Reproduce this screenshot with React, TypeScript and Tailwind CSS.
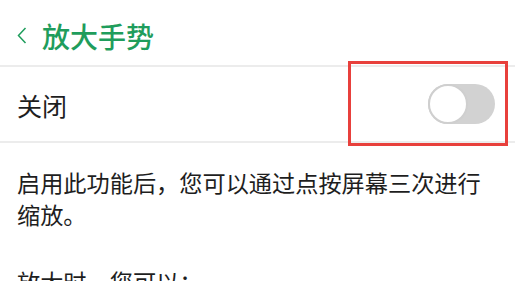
import React from 'react'

const font = { fontFamily: '"Noto Sans CJK SC", "Noto Sans", sans-serif' }

function Toggle() {
  return (
    <div className="flex h-[40px] w-[67px] items-center rounded-full bg-[#d2d2d2]">
      <div className="h-[40px] w-[40px] rounded-full border-2 border-[#cfcfcf] bg-white" />
    </div>
  )
}

export default function App() {
  return (
    <div className="relative h-[281px] w-[531px] overflow-hidden bg-white text-[#1e1e1e]" style={font}>
      {/* Header */}
      <header className="flex h-[65px] items-center gap-[15px] pl-[17px] pt-[6px] text-[#1f9d5c]">
        <svg width="10" height="17" viewBox="0 0 10 17" fill="none" stroke="currentColor" strokeWidth="1.5">
          <polyline points="8.5,1 1.5,8.5 8.5,16" />
        </svg>
        <span className="text-[28px] font-medium leading-none">放大手势</span>
      </header>

      <div className="w-[515px]">
        <div className="h-[2px] bg-[#ececec]" />
        {/* Switch row */}
        <div className="flex h-[74px] items-center justify-between pl-[17px] pr-[20px]">
          <span className="pt-[3px] text-[25px] leading-none">关闭</span>
          <Toggle />
        </div>
        <div className="h-[2px] bg-[#ececec]" />
      </div>

      {/* Description */}
      <div className="px-[17px] pt-[23px] text-[23.2px] leading-[32px]">
        <p className="w-[475px]">启用此功能后，您可以通过点按屏幕三次进行缩放。</p>
        <p className="mt-[35px]">放大时，您可以：</p>
      </div>

      {/* Highlight */}
      <div className="pointer-events-none absolute left-[348px] top-[61px] h-[85px] w-[160px] border-[3px] border-[#e8403c]" />
    </div>
  )
}
